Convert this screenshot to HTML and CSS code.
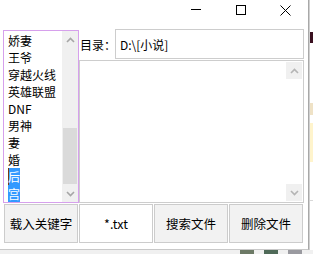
FILE: index.html
```html
<!DOCTYPE html>
<html lang="zh-CN">
<head>
    <meta charset="UTF-8">
    <title>关键字搜索</title>
    <link rel="stylesheet" href="styles.css">
</head>
<body>
    <div class="screen">
        <div class="top">
            <div class="window">
                <div class="titlebar">
                    <span class="ctl"><svg width="10" height="10" viewBox="0 0 10 10"><path d="M0 4.5H10" stroke="#000" stroke-width="1"/></svg></span>
                    <span class="ctl"><svg width="10" height="10" viewBox="0 0 10 10"><rect x="0.5" y="0.5" width="9" height="9" fill="none" stroke="#000" stroke-width="1"/></svg></span>
                    <span class="ctl"><svg width="11" height="11" viewBox="0 0 11 11"><path d="M0.5 0.5L10.5 10.5M10.5 0.5L0.5 10.5" stroke="#000" stroke-width="1"/></svg></span>
                </div>

                <div class="main">
                    <div class="keylist">
                        <div class="items">
                            <div>娇妻</div>
                            <div>王爷</div>
                            <div>穿越火线</div>
                            <div>英雄联盟</div>
                            <div>DNF</div>
                            <div>男神</div>
                            <div>妻</div>
                            <div>婚</div>
                            <div><span class="sel caret">后</span></div>
                            <div><span class="sel">宫</span></div>
                        </div>
                        <div class="vscroll">
                            <span class="arrow"><svg width="9" height="6" viewBox="0 0 9 6"><path d="M1 5L4.5 1.5L8 5" fill="none" stroke="#a6a6a6" stroke-width="1.6"/></svg></span>
                            <span class="track"><span class="thumb"></span></span>
                            <span class="arrow"><svg width="9" height="6" viewBox="0 0 9 6"><path d="M1 1L4.5 4.5L8 1" fill="none" stroke="#a6a6a6" stroke-width="1.6"/></svg></span>
                        </div>
                    </div>

                    <div class="side">
                        <div class="dirrow">
                            <label class="dirlabel">目录：</label>
                            <div class="dirbox">D:\[小说]</div>
                        </div>
                        <div class="output">
                            <div class="oscroll">
                                <span class="arrow"><svg width="9" height="6" viewBox="0 0 9 6"><path d="M1 5L4.5 1.5L8 5" fill="none" stroke="#b4b4b4" stroke-width="1.6"/></svg></span>
                                <span class="arrow"><svg width="9" height="6" viewBox="0 0 9 6"><path d="M1 1L4.5 4.5L8 1" fill="none" stroke="#b4b4b4" stroke-width="1.6"/></svg></span>
                            </div>
                        </div>
                    </div>
                </div>

                <div class="buttons">
                    <button class="btn">载入关键字</button>
                    <button class="btn white">*.txt</button>
                    <button class="btn">搜索文件</button>
                    <button class="btn">删除文件</button>
                </div>
            </div>

            <div class="desk-right">
                <span class="strip dark"></span>
                <span class="strip beige"></span>
                <span class="strip yellow"></span>
                <span class="strip rest"></span>
            </div>
        </div>
        <div class="desk-bottom">
            <span class="blob b1"></span>
            <span class="blob b2"></span>
            <span class="blob b3"></span>
        </div>
    </div>
</body>
</html>
```

FILE: styles.css
```css
body {
    margin: 0;
    font-family: "Noto Sans CJK SC", "Liberation Sans", sans-serif;
    font-size: 12px;
    color: #000;
    background: #f0f0f0;
}

.screen {
    width: 313px;
    height: 254px;
    overflow: hidden;
}

.top {
    display: flex;
    height: 250px;
}

.window {
    box-sizing: border-box;
    width: 309px;
    height: 250px;
    background: #fff;
    border-right: 1px solid #a8a8a8;
    border-bottom: 1px solid #c8c8c8;
}

.titlebar {
    display: flex;
    justify-content: flex-end;
    height: 29px;
}

.ctl {
    display: flex;
    justify-content: center;
    width: 45px;
    padding-top: 5px;
    box-sizing: border-box;
}

.ctl:first-child {
    padding-top: 5px;
}

.main {
    display: flex;
    height: 175px;
    padding-left: 3px;
}

.keylist {
    display: flex;
    box-sizing: border-box;
    width: 76px;
    height: 173px;
    margin-top: 1px;
    border: 1px solid #d6a0ec;
}

.items {
    flex: 1;
    overflow: hidden;
    padding: 1px 0 0 4px;
    line-height: 17px;
    white-space: nowrap;
}

.sel {
    background: #3399ff;
    color: #fff;
}

.caret {
    box-shadow: inset 1px 0 0 #7a3b12;
}

.vscroll {
    display: flex;
    flex-direction: column;
    width: 16px;
    background: #f0f0f0;
}

.vscroll .arrow {
    display: flex;
    align-items: center;
    justify-content: center;
    height: 17px;
}

.vscroll .track {
    flex: 1;
    display: flex;
    flex-direction: column;
    justify-content: flex-end;
}

.vscroll .thumb {
    height: 56px;
    margin: 0 1px 1px;
    background: #dadada;
}

.side {
    display: flex;
    flex-direction: column;
    width: 225px;
    margin-left: 0;
}

.dirrow {
    display: flex;
    height: 30px;
    align-items: stretch;
}

.dirlabel {
    display: flex;
    align-items: center;
    width: 35px;
    padding-left: 1px;
    white-space: nowrap;
    overflow: visible;
}

.dirbox {
    box-sizing: border-box;
    display: flex;
    align-items: center;
    width: 190px;
    padding-left: 4px;
    padding-top: 1px;
    border: 1px solid #cdcdcd;
}

.output {
    display: flex;
    justify-content: flex-end;
    box-sizing: border-box;
    height: 143px;
    margin-top: 1px;
    border: 1px solid #cdcdcd;
}

.oscroll {
    display: flex;
    flex-direction: column;
    justify-content: space-between;
    width: 16px;
    margin: 1px 1px 1px 0;
}

.oscroll .arrow {
    display: flex;
    align-items: center;
    justify-content: center;
    height: 17px;
    background: #f0f0f0;
}

.buttons {
    display: flex;
    gap: 1px;
    padding-left: 4px;
}

.btn {
    box-sizing: border-box;
    width: 74px;
    height: 39px;
    margin: 0;
    padding: 0;
    border: 1px solid #cccccc;
    background: #f2f2f2;
    font-family: "Noto Sans CJK SC", "Liberation Sans", sans-serif;
    font-size: 12.5px;
    color: #000;
}

.btn.white {
    background: #fff;
}

.desk-right {
    display: flex;
    flex-direction: column;
    flex: 1;
    background: #fff;
    border-left: 1px solid #d0d0d0;
}

.strip {
    display: block;
}

.strip.dark {
    height: 11px;
    margin-top: 32px;
    background: #3a1020;
}

.strip.beige {
    height: 12px;
    margin-top: 60px;
    background: #efe2c6;
}

.strip.yellow {
    height: 39px;
    margin-top: 8px;
    background: #fff4cc;
}

.strip.rest {
    height: 1px;
    margin-top: 38px;
    background: #d8d8d8;
}

.desk-bottom {
    display: flex;
    gap: 10px;
    height: 4px;
    padding-left: 240px;
    background: #f0f0f0;
}

.blob {
    display: block;
    width: 14px;
    height: 4px;
}

.blob.b1 { background: #6d7a66; }
.blob.b2 { background: #4f6a58; }
.blob.b3 { background: #9a9aa0; }
```
